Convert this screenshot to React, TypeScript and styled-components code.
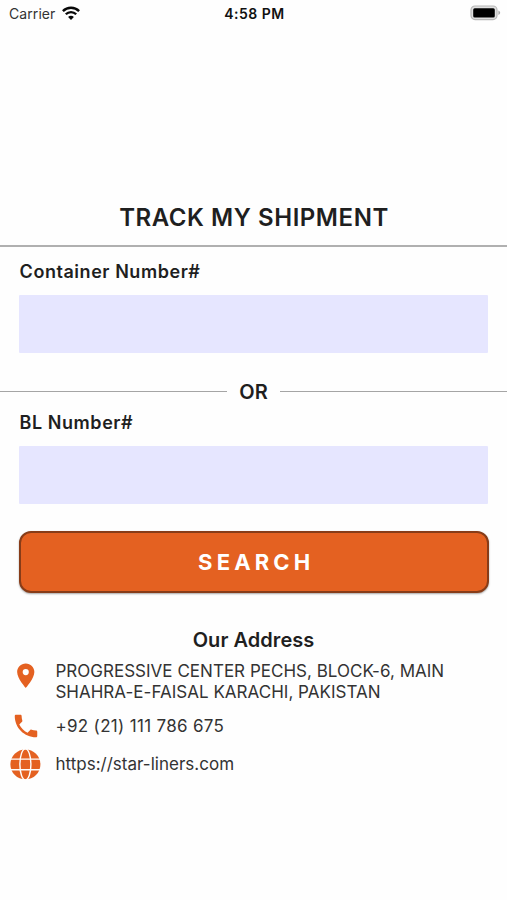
import React from "react";
import styled, { createGlobalStyle } from "styled-components";
import { MdLocationOn, MdPhone } from "react-icons/md";

const GlobalStyle = createGlobalStyle`
  * { box-sizing: border-box; }
  body { margin: 0; background: #fefefe; }
`;

const Screen = styled.main`
  min-height: 900px;
  display: flex;
  flex-direction: column;
  background: #fefefe;
  color: #1f1f1f;
  font-family: Inter, "Liberation Sans", sans-serif;
`;

const StatusBar = styled.header`
  height: 28px;
  padding: 0 7px 0 9px;
  display: grid;
  grid-template-columns: 1fr auto 1fr;
  align-items: center;
  font-size: 14px;
  line-height: 28px;
`;

const Carrier = styled.div`
  display: flex;
  align-items: center;
  gap: 7px;
  color: #333;
  letter-spacing: 0.08px;
  svg { margin-top: -2px; }
`;

const Clock = styled.time`
  font-weight: 600;
  letter-spacing: 0.5px;
  color: #111;
`;

const BatterySlot = styled.div`
  display: flex;
  justify-content: flex-end;
  margin: -2px -1px 0 0;
`;

const Title = styled.h1`
  margin: 175px 0 0;
  padding-left: 1px;
  height: 42px;
  border-bottom: 2px solid #b0b0b0;
  box-sizing: content-box;
  text-align: center;
  font-size: 24px;
  font-weight: 600;
  line-height: 30px;
  letter-spacing: 0.55px;
`;

const Field = styled.label<{ $top: number }>`
  display: flex;
  flex-direction: column;
  gap: 12px;
  margin: ${({ $top }) => $top}px 19px 0 19px;
  font-size: 18px;
  font-weight: 600;
  line-height: 22px;
  letter-spacing: 0.55px;
`;

const FieldName = styled.span`
  padding-left: 0.6px;
`;

const Input = styled.input`
  height: 58px;
  width: 100%;
  padding: 0 14px;
  border: 0;
  outline: 0;
  border-radius: 1px;
  background: #e6e6ff;
  font: inherit;
`;

const Divider = styled.div`
  display: flex;
  align-items: center;
  gap: 12px;
  margin-top: 26px;
  font-size: 20px;
  font-weight: 600;
  line-height: 26px;

  &::before,
  &::after {
    content: "";
    flex: 1;
    height: 1px;
    margin-top: -1px;
    background: #a5a5a5;
  }
`;

const SearchButton = styled.button`
  height: 62px;
  margin: 27px 18px 0 19px;
  padding: 0 0 0 4.5px;
  border: 2px solid #873c18;
  border-radius: 12px;
  background: #e46121;
  box-shadow: 0 1px 2px rgba(0, 0, 0, 0.35);
  color: #fff;
  font-family: inherit;
  font-size: 22px;
  font-weight: 700;
  letter-spacing: 4.15px;
`;

const AddressTitle = styled.h2`
  margin: 34px 0 7px;
  text-align: center;
  font-size: 20px;
  font-weight: 600;
  line-height: 26px;
  letter-spacing: 0.05px;
`;

const ContactList = styled.address`
  display: flex;
  flex-direction: column;
  font-style: normal;
`;

const ContactRow = styled.div<{ $height: number; $spacing?: number }>`
  display: grid;
  grid-template-columns: 31px 1fr;
  column-gap: 14.4px;
  align-items: center;
  height: ${({ $height }) => $height}px;
  padding-left: 10px;
  color: #333;
  font-size: 17px;
  line-height: 21px;
  letter-spacing: ${({ $spacing = 0.02 }) => $spacing}px;
`;

const IconSlot = styled.span<{ $lift?: number }>`
  display: flex;
  justify-content: center;
  margin-top: ${({ $lift = 0 }) => -$lift}px;
  color: #e46121;
`;

const WifiIcon = () => (
  <svg width="18" height="14" viewBox="0 0 18 14" fill="none" stroke="#080808">
    <path d="M.9 5.1a11.5 11.5 0 0 1 16.2 0" strokeWidth="2.4" />
    <path d="M3.8 8.3a7.3 7.3 0 0 1 10.4 0" strokeWidth="2.3" />
    <path d="M9 14 6.1 11a4 4 0 0 1 5.8 0Z" fill="#080808" stroke="none" />
  </svg>
);

const BatteryIcon = () => (
  <svg width="31" height="16" viewBox="0 0 31 16">
    <rect x="1" y="1" width="26" height="13.6" rx="4" fill="#e0e0e0" stroke="#b8b8b8" strokeWidth="1.2" />
    <rect x="3.2" y="3.2" width="21.6" height="9.4" rx="1.5" fill="#000" />
    <path d="M28.4 5.6q1.8.8 1.8 2.2t-1.8 2.2z" fill="#aaa" />
  </svg>
);

const GlobeIcon = () => (
  <svg width="31" height="31" viewBox="0 0 31 31">
    <circle cx="15.4" cy="15.4" r="15" fill="currentColor" />
    <g fill="none" stroke="#fefefe" strokeWidth="1.4">
      <ellipse cx="15.4" cy="15.4" rx="5.5" ry="15.6" />
      <path d="M0 10.1h31M0 20.7h31" />
    </g>
  </svg>
);

export default function App() {
  return (
    <>
      <GlobalStyle />
      <Screen>
        <StatusBar>
          <Carrier>
            Carrier
            <WifiIcon />
          </Carrier>
          <Clock>4:58 PM</Clock>
          <BatterySlot>
            <BatteryIcon />
          </BatterySlot>
        </StatusBar>
        <Title>TRACK MY SHIPMENT</Title>
        <Field $top={14}>
          <FieldName>Container Number#</FieldName>
          <Input />
        </Field>
        <Divider>OR</Divider>
        <Field $top={7}>
          <FieldName>BL Number#</FieldName>
          <Input />
        </Field>
        <SearchButton type="button">SEARCH</SearchButton>
        <AddressTitle>Our Address</AddressTitle>
        <ContactList>
          <ContactRow $height={43}>
            <IconSlot $lift={11}>
              <MdLocationOn size={29.5} />
            </IconSlot>
            <span>
              PROGRESSIVE CENTER PECHS, BLOCK-6, MAIN
              <br />
              SHAHRA-E-FAISAL KARACHI, PAKISTAN
            </span>
          </ContactRow>
          <ContactRow $height={46} $spacing={0.32}>
            <IconSlot>
              <MdPhone size={30} />
            </IconSlot>
            <span>+92 (21) 111 786 675</span>
          </ContactRow>
          <ContactRow $height={31}>
            <IconSlot>
              <GlobeIcon />
            </IconSlot>
            <span>https://star-liners.com</span>
          </ContactRow>
        </ContactList>
      </Screen>
    </>
  );
}
